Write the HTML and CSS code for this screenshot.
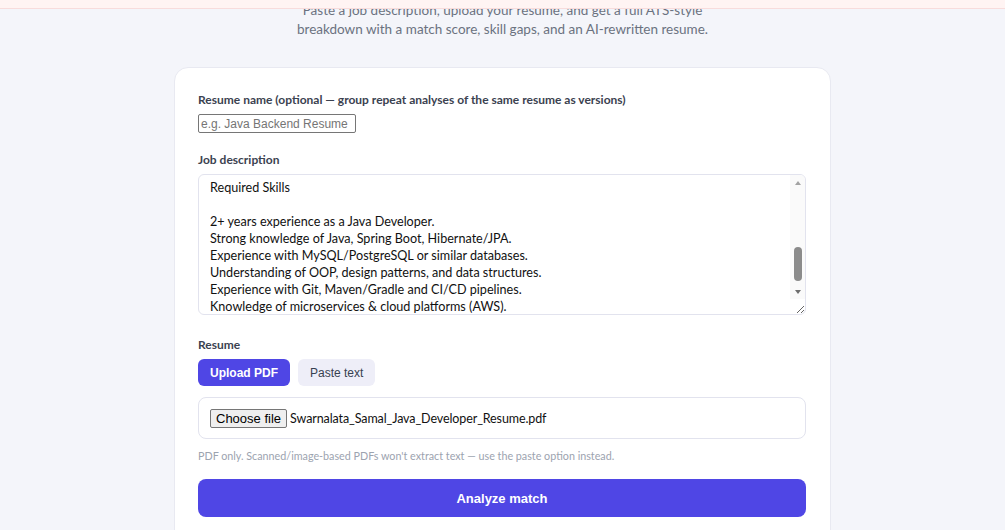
FILE: index.html
```html
<!DOCTYPE html>
<html lang="en">

<head>
    <meta charset="UTF-8">
    <meta name="viewport" content="width=device-width, initial-scale=1.0">
    <title>Resume Match</title>
    <link rel="stylesheet" href="styles.css">
</head>

<body>
    <div class="topbar"></div>

    <p class="intro">Paste a job description, upload your resume, and get a full ATS-style<br>breakdown with a match score, skill gaps, and an AI-rewritten resume.</p>

    <form class="card" onsubmit="return false">
        <div class="field">
            <label class="label" for="resumeName">Resume name (optional — group repeat analyses of the same resume as versions)</label>
            <input class="name-input" id="resumeName" type="text" placeholder="e.g. Java Backend Resume">
        </div>

        <div class="field field-jd">
            <label class="label" for="jd">Job description</label>
            <div class="jd-wrap">
                <textarea class="jd" id="jd">Job Title: Java Developer
Location: Bengaluru, India (Hybrid)
Experience: 2+ years

About the Role

We are looking for a Java Developer to join our backend team.

Responsibilities

Design, develop and test RESTful APIs using Spring Boot.
Collaborate with frontend, QA and DevOps teams.

Required Skills

2+ years experience as a Java Developer.
Strong knowledge of Java, Spring Boot, Hibernate/JPA.
Experience with MySQL/PostgreSQL or similar databases.
Understanding of OOP, design patterns, and data structures.
Experience with Git, Maven/Gradle and CI/CD pipelines.
Knowledge of microservices &amp; cloud platforms (AWS).</textarea>
                <!-- scrollbar for the description box -->
                <div class="bar">
                    <span class="bar-arrow up"></span>
                    <div class="bar-track">
                        <div class="bar-thumb" id="thumb"></div>
                    </div>
                    <span class="bar-arrow down"></span>
                </div>
            </div>
        </div>

        <div class="field field-resume">
            <span class="label">Resume</span>
            <div class="tabs">
                <button type="button" class="tab active">Upload PDF</button>
                <button type="button" class="tab">Paste text</button>
            </div>
            <label class="file-box">
                <input class="file-input" type="file" accept="application/pdf">
                <span class="file-btn">Choose file</span>
                <span class="file-name">Swarnalata_Samal_Java_Developer_Resume.pdf</span>
            </label>
            <p class="hint">PDF only. Scanned/image-based PDFs won't extract text — use the paste option instead.</p>
        </div>

        <button type="submit" class="analyze">Analyze match</button>
    </form>

    <script>
        // scroll the description to the skills section and size the thumb
        var oJd = document.getElementById('jd')
        var oThumb = document.getElementById('thumb')
        var track = 94

        oJd.scrollTop = 227

        function drawThumb() {
            var h = track * oJd.clientHeight / oJd.scrollHeight
            var t = track * oJd.scrollTop / oJd.scrollHeight
            oThumb.style.height = h + 'px'
            oThumb.style.top = t + 'px'
        }

        drawThumb()
        oJd.onscroll = drawThumb
    </script>
</body>

</html>
```

FILE: styles.css
```css
* {
    margin: 0;
    padding: 0;
    box-sizing: border-box;
}

body {
    background-color: #f4f5fa;
    font-family: Lato, "Noto Sans", sans-serif;
    color: #1f2937;
    padding-bottom: 40px;
}

.topbar {
    position: fixed;
    top: 0;
    left: 0;
    right: 0;
    height: 9px;
    background-color: #fff4f3;
    border-bottom: 1px solid #f8dcdc;
    z-index: 10;
}

.intro {
    margin-top: 1px;
    text-align: center;
    font-size: 13.5px;
    line-height: 19px;
    color: #6b7280;
}

.card {
    width: 657px;
    margin: 28px auto 0;
    background-color: #fff;
    border: 1px solid #e8e9f1;
    border-radius: 14px;
    padding: 24px 24px 30px 23px;
}

.field {
    margin-bottom: 19px;
}

.field-jd {
    margin-bottom: 22px;
}

.field-resume {
    margin-bottom: 16px;
}

.label {
    display: block;
    font-size: 12px;
    line-height: 16px;
    font-weight: 700;
    color: #3b4250;
    margin-bottom: 6px;
}

.name-input {
    display: block;
    width: 158px;
    height: 19px;
    padding: 1px 2px;
    border: 1px solid #767676;
    border-radius: 2px;
    font-family: "Liberation Sans", Arial, sans-serif;
    font-size: 12px;
    color: #111;
}

.name-input::placeholder {
    color: #757575;
}

.jd-wrap {
    position: relative;
}

.jd {
    display: block;
    width: 100%;
    height: 141px;
    padding: 10px 26px 10px 11px;
    border: 1px solid #e2e3ee;
    border-radius: 6px;
    font-family: Lato, "Noto Sans", sans-serif;
    font-size: 12.6px;
    line-height: 17px;
    color: #111;
    resize: vertical;
    overflow-y: hidden;
}

.bar {
    position: absolute;
    top: 1px;
    right: 1px;
    width: 15px;
    height: 124px;
    display: flex;
    flex-direction: column;
    background-color: #fafafa;
    border-top-right-radius: 5px;
}

.bar-arrow {
    display: flex;
    justify-content: center;
    align-items: center;
    height: 15px;
}

.bar-arrow::before {
    content: "";
    border-left: 3.5px solid transparent;
    border-right: 3.5px solid transparent;
}

.bar-arrow.up::before {
    border-bottom: 4px solid #a3a3a3;
}

.bar-arrow.down::before {
    border-top: 4px solid #6e6e6e;
}

.bar-track {
    position: relative;
    flex: 1;
}

.bar-thumb {
    position: absolute;
    left: 3.5px;
    width: 8px;
    border-radius: 4px;
    background-color: #8b8b8b;
}

.tabs {
    display: flex;
    gap: 8px;
    margin-bottom: 11px;
}

.tab {
    height: 27px;
    padding: 0 12px;
    border: none;
    border-radius: 6px;
    background-color: #eeeef8;
    color: #374151;
    font-family: "Liberation Sans", Arial, sans-serif;
    font-size: 12px;
    cursor: pointer;
}

.tab.active {
    background-color: #4f46e5;
    color: #fff;
    font-weight: 600;
}

.file-box {
    display: flex;
    align-items: center;
    height: 42px;
    padding: 0 11px;
    border: 1px solid #e2e3ee;
    border-radius: 8px;
    cursor: pointer;
}

.file-input {
    display: none;
}

.file-btn {
    height: 19px;
    padding: 0 5px;
    border: 1px solid #767676;
    border-radius: 2px;
    background-color: #efefef;
    font-family: "Liberation Sans", Arial, sans-serif;
    font-size: 13px;
    line-height: 17px;
    color: #000;
}

.file-name {
    margin-left: 3px;
    font-size: 12.5px;
    letter-spacing: -0.1px;
    color: #111;
}

.hint {
    margin-top: 10px;
    font-size: 10.75px;
    line-height: 14px;
    color: #9ca3af;
}

.analyze {
    display: block;
    width: 100%;
    height: 38px;
    border: none;
    border-radius: 8px;
    background-color: #4f46e5;
    color: #fff;
    font-family: "Liberation Sans", Arial, sans-serif;
    font-size: 13px;
    font-weight: 700;
    cursor: pointer;
}
```
